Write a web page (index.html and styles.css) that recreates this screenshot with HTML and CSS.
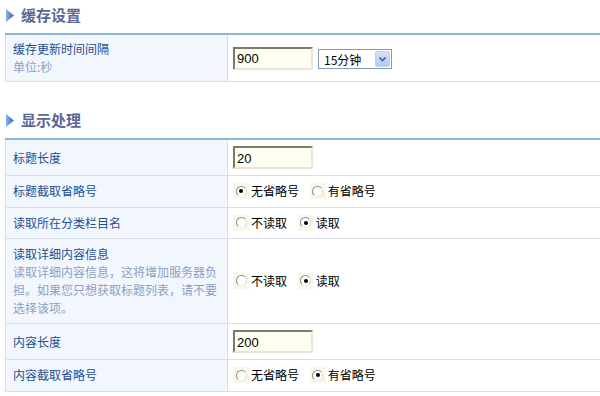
FILE: index.html
```html
<!DOCTYPE html>
<html lang="zh-CN">
<head>
    <meta charset="UTF-8">
    <title>缓存设置</title>
    <link rel="stylesheet" href="styles.css">
</head>
<body>
    <div class="section">
        <h2 class="title">
            <svg class="arrow" width="8" height="13" viewBox="0 0 8 13">
                <defs>
                    <linearGradient id="ag" x1="0" y1="0" x2="1" y2="0">
                        <stop offset="0" stop-color="#8fb2ee"/>
                        <stop offset="1" stop-color="#2d5fc9"/>
                    </linearGradient>
                </defs>
                <polygon points="0,0 8,6.5 0,13" fill="url(#ag)"/>
            </svg>
            缓存设置
        </h2>
        <table class="form">
            <tr class="compact">
                <td class="label">
                    缓存更新时间间隔
                    <div class="hint">单位:秒</div>
                </td>
                <td class="field">
                    <div class="inline">
                        <input class="text" type="text" value="900">
                        <span class="select-wrap">
                            <select class="select">
                                <option>15分钟</option>
                            </select>
                            <span class="select-btn">
                                <svg width="7" height="5" viewBox="0 0 7 5"><path d="M0.5 0.5 L3.5 3.5 L6.5 0.5" fill="none" stroke="#4b5f86" stroke-width="1.6"/></svg>
                            </span>
                        </span>
                    </div>
                </td>
            </tr>
        </table>
    </div>

    <div class="section">
        <h2 class="title">
            <svg class="arrow" width="8" height="13" viewBox="0 0 8 13">
                <polygon points="0,0 8,6.5 0,13" fill="url(#ag)"/>
            </svg>
            显示处理
        </h2>
        <table class="form">
            <tr>
                <td class="label">标题长度</td>
                <td class="field"><input class="text" type="text" value="20"></td>
            </tr>
            <tr>
                <td class="label">标题截取省略号</td>
                <td class="field">
                    <label class="opt"><span class="rbox"><input type="radio" name="t1" checked></span>无省略号</label>
                    <label class="opt"><span class="rbox"><input type="radio" name="t1"></span>有省略号</label>
                </td>
            </tr>
            <tr>
                <td class="label">读取所在分类栏目名</td>
                <td class="field">
                    <label class="opt"><span class="rbox"><input type="radio" name="t2"></span>不读取</label>
                    <label class="opt"><span class="rbox"><input type="radio" name="t2" checked></span>读取</label>
                </td>
            </tr>
            <tr>
                <td class="label">
                    读取详细内容信息
                    <div class="hint">读取详细内容信息，这将增加服务器负担。如果您只想获取标题列表，请不要选择该项。</div>
                </td>
                <td class="field">
                    <label class="opt"><span class="rbox"><input type="radio" name="t3"></span>不读取</label>
                    <label class="opt"><span class="rbox"><input type="radio" name="t3" checked></span>读取</label>
                </td>
            </tr>
            <tr>
                <td class="label">内容长度</td>
                <td class="field"><input class="text" type="text" value="200"></td>
            </tr>
            <tr>
                <td class="label">内容截取省略号</td>
                <td class="field">
                    <label class="opt"><span class="rbox"><input type="radio" name="t4"></span>无省略号</label>
                    <label class="opt"><span class="rbox"><input type="radio" name="t4" checked></span>有省略号</label>
                </td>
            </tr>
        </table>
    </div>
</body>
</html>
```

FILE: styles.css
```css
body {
    margin: 0;
    padding: 0 0 0 5px;
    background: #fff;
    font-family: "Noto Sans CJK SC", sans-serif;
    font-size: 12px;
    color: #000;
}
.section + .section {
    margin-top: 23px;
}
.title {
    display: flex;
    align-items: center;
    box-sizing: border-box;
    height: 33px;
    margin: 0;
    padding-bottom: 4px;
    font-size: 15px;
    font-weight: bold;
    color: #5a6898;
}
.arrow {
    margin: 2px 7px 0 1px;
}
.form {
    width: 100%;
    border-collapse: collapse;
    border-top: 2px solid #87b9d7;
    border-left: 1px solid #d6dfea;
}
.form td {
    border-bottom: 1px solid #d6dfea;
    padding: 6px 5px;
    line-height: 18px;
    vertical-align: middle;
}
.form .compact td {
    padding-top: 5px;
    padding-bottom: 5px;
}
.form .label {
    width: 207px;
    padding-left: 7px;
    padding-right: 7px;
    background: #f2f7fe;
    border-right: 1px solid #d6dfea;
    color: #1d4f92;
}
.hint {
    color: #8e9fc3;
}
.inline {
    display: flex;
    align-items: center;
    gap: 5px;
}
.text {
    box-sizing: border-box;
    width: 80px;
    height: 23px;
    margin: 0;
    padding: 1px 2px 0;
    border: 2px solid;
    border-color: #7b7b6c #e8e6d6 #e8e6d6 #7b7b6c;
    background: #fefff1;
    font-family: "Liberation Sans", Arial, sans-serif;
    font-size: 13px;
    color: #000;
    vertical-align: middle;
}
.select-wrap {
    position: relative;
    display: inline-block;
    margin-top: 2px;
}
.select {
    appearance: none;
    box-sizing: border-box;
    width: 74px;
    height: 20px;
    margin: 0;
    padding: 0 0 0 5px;
    border: 1px solid #7f9db9;
    border-radius: 0;
    background: #fff;
    font-family: "Noto Sans CJK SC", sans-serif;
    font-size: 12px;
    color: #000;
}
.select-btn {
    position: absolute;
    top: 2px;
    right: 2px;
    width: 15px;
    height: 16px;
    box-sizing: border-box;
    display: flex;
    align-items: center;
    justify-content: center;
    border: 1px solid #bcd0f6;
    border-radius: 2px;
    background: linear-gradient(#d3e1fc, #b3c8f5);
}
.opt {
    display: inline-flex;
    align-items: center;
    margin-right: 8px;
}
.rbox {
    display: inline-flex;
    align-items: center;
    justify-content: center;
    width: 16px;
    height: 16px;
    margin-right: 2px;
    background: #f8f8e9;
}
.rbox input {
    appearance: none;
    box-sizing: border-box;
    width: 11px;
    height: 11px;
    margin: 0;
    border-radius: 50%;
    border: 1px solid;
    border-color: #8c8c8c #d9d9d9 #ececec #8c8c8c;
    background: #fff;
    position: relative;
}
.rbox input:checked::after {
    content: "";
    position: absolute;
    left: 2.5px;
    top: 2.5px;
    width: 4px;
    height: 4px;
    border-radius: 50%;
    background: #000;
}
```
